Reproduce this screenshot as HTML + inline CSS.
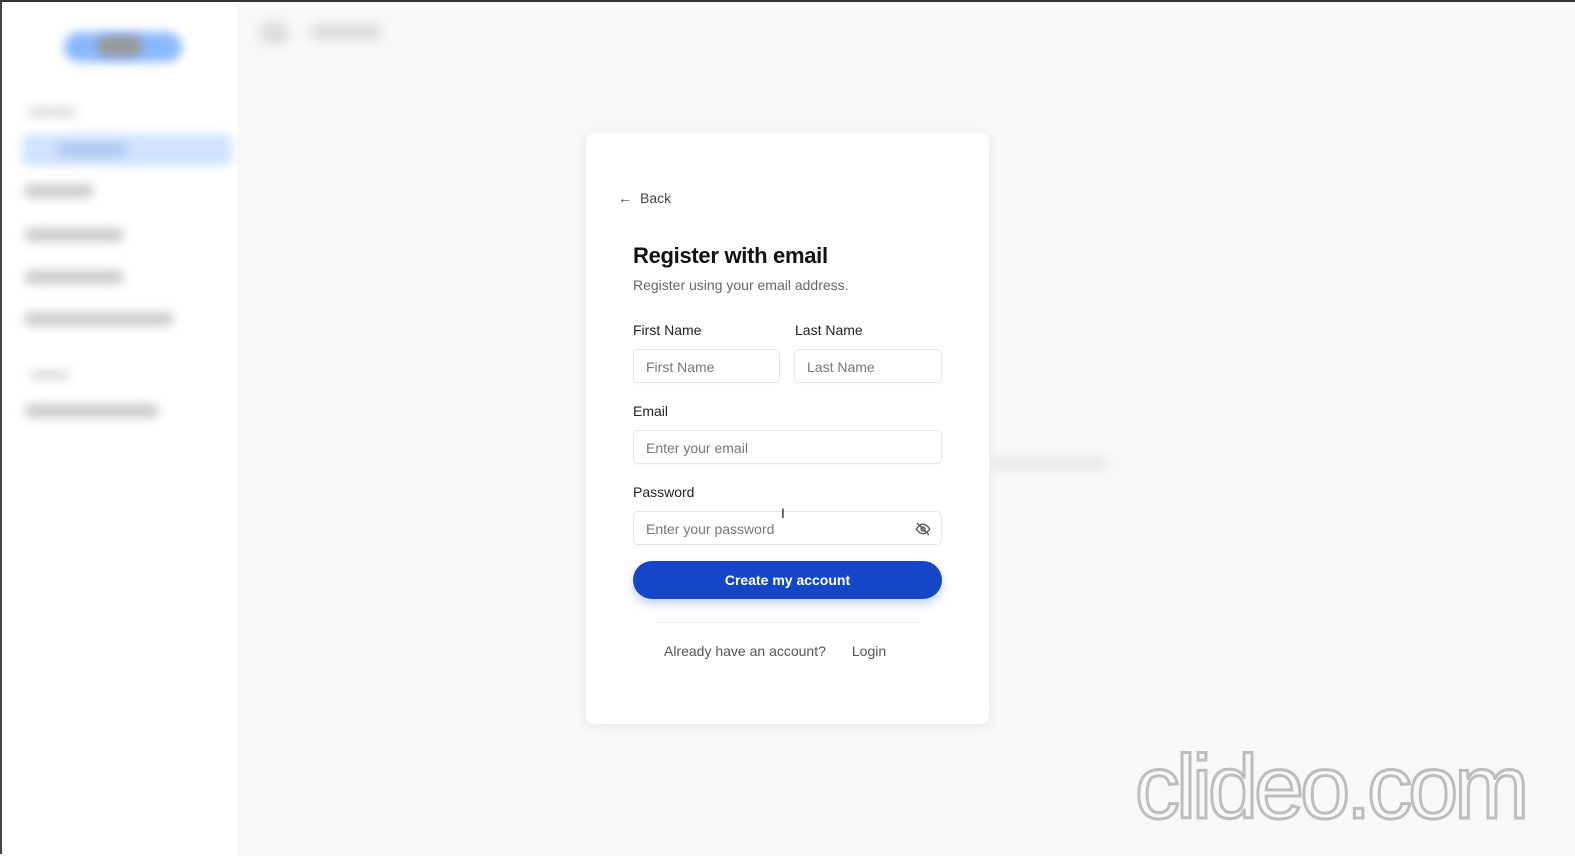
<!DOCTYPE html>
<html><head><meta charset="utf-8"><style>
*{box-sizing:border-box;margin:0;padding:0}
body{width:1575px;height:854px;overflow:hidden;background:#f8f8f8;font-family:"Liberation Sans",sans-serif;position:relative;border-top:2px solid #333;border-left:2px solid #444}
.side{position:absolute;left:0;top:0;width:235px;height:854px;background:#fff}
.b{position:absolute;filter:blur(5px);border-radius:8px}
.card{position:absolute;left:584px;top:131px;width:403px;height:591px;background:#fff;border-radius:8px;box-shadow:0 2px 12px rgba(0,0,0,.08)}
.abs{position:absolute}
.lbl{font-size:14px;color:#222}
.inp{position:absolute;height:34px;border:1px solid #e6e6e6;border-radius:5px;font-size:14px;color:#777;padding:9px 0 0 12px;box-shadow:0 1px 2px rgba(0,0,0,.04)}
.wm{position:absolute;left:1133px;top:741px;font-size:90px;line-height:90px;color:#f8f8f8;-webkit-text-stroke:3px #bdbdbd;letter-spacing:-4px;font-family:"Liberation Sans",sans-serif;white-space:nowrap}
</style></head><body>
<div class="side">
<div class="b" style="left:62px;top:30px;width:118px;height:30px;background:#8ab8ff;border-radius:16px"></div>
<div class="b" style="left:95px;top:34px;width:45px;height:20px;background:#999"></div>
<div class="b" style="left:25px;top:105px;width:50px;height:10px;background:#ddd"></div>
<div class="b" style="left:20px;top:132px;width:210px;height:32px;background:#cfe3ff"></div>
<div class="b" style="left:55px;top:142px;width:70px;height:12px;background:#a9c4ea"></div>
<div class="b" style="left:22px;top:182px;width:70px;height:14px;background:#ccc"></div>
<div class="b" style="left:22px;top:226px;width:100px;height:14px;background:#ccc"></div>
<div class="b" style="left:22px;top:268px;width:100px;height:14px;background:#ccc"></div>
<div class="b" style="left:22px;top:310px;width:150px;height:14px;background:#ccc"></div>
<div class="b" style="left:28px;top:368px;width:40px;height:10px;background:#ddd"></div>
<div class="b" style="left:22px;top:402px;width:135px;height:14px;background:#ccc"></div>
</div>
<div class="b" style="left:258px;top:20px;width:28px;height:22px;background:#ddd"></div>
<div class="b" style="left:308px;top:22px;width:72px;height:16px;background:#ddd"></div>
<div class="b" style="left:990px;top:455px;width:115px;height:12px;background:#e6e6e6"></div>
<div class="card">
<div class="abs" style="left:32px;top:57px;font-size:14px;color:#444"><span style="font-size:14px;margin-right:8px">&#8592;</span>Back</div>
<div class="abs" style="left:47px;top:110px;font-size:22px;font-weight:bold;color:#111;letter-spacing:-.3px">Register with email</div>
<div class="abs" style="left:47px;top:144px;font-size:14px;color:#666">Register using your email address.</div>
<div class="abs lbl" style="left:47px;top:189px">First Name</div>
<div class="abs lbl" style="left:209px;top:189px">Last Name</div>
<div class="inp" style="left:47px;top:216px;width:147px">First Name</div>
<div class="inp" style="left:208px;top:216px;width:148px">Last Name</div>
<div class="abs lbl" style="left:47px;top:270px">Email</div>
<div class="inp" style="left:47px;top:297px;width:309px">Enter your email</div>
<div class="abs lbl" style="left:47px;top:351px">Password</div>
<div class="inp" style="left:47px;top:378px;width:309px">Enter your password
<svg style="position:absolute;right:10px;top:9px" width="16" height="16" viewBox="0 0 24 24" fill="none" stroke="#555" stroke-width="2"><path d="M2 12s4-7 10-7 10 7 10 7-4 7-10 7S2 12 2 12z"/><circle cx="12" cy="12" r="3"/><path d="M3 3l18 18"/></svg></div>
<div class="abs" style="left:195px;top:372px;font-size:14px;color:#222">I</div>
<div class="abs" style="left:47px;top:428px;width:309px;height:38px;background:#1646c8;border-radius:19px;color:#fff;font-size:14px;font-weight:bold;text-align:center;line-height:38px;box-shadow:0 5px 10px rgba(22,70,200,.25)">Create my account</div>
<div class="abs" style="left:70px;top:489px;width:264px;height:1px;background:#eee"></div>
<div class="abs" style="left:78px;top:510px;font-size:14px;color:#555">Already have an account?<span style="margin-left:26px">Login</span></div>
</div>
<div class="wm">clideo.com</div>
</body></html>
